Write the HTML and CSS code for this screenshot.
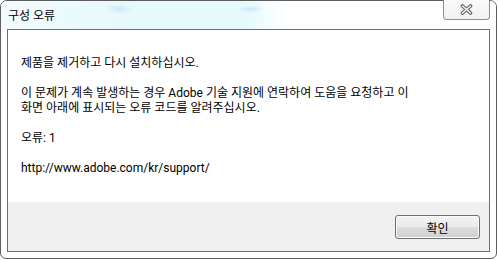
FILE: index.html
```html
<!DOCTYPE html>
<html lang="ko">
<head>
    <meta charset="UTF-8">
    <title>구성 오류</title>
    <link rel="stylesheet" href="styles.css">
</head>
<body>

<div class="window">
    <div class="titlebar">
        <span class="title">구성 오류</span>
        <button class="close-btn" aria-label="닫기">
            <svg width="13" height="11" viewBox="0 0 13 11">
                <path d="M2.5 2 L10.5 9 M10.5 2 L2.5 9" stroke="#5a5a5a" stroke-width="3.6" stroke-linecap="round"/>
                <path d="M2.5 2 L10.5 9 M10.5 2 L2.5 9" stroke="#fafafa" stroke-width="1.6" stroke-linecap="round"/>
            </svg>
        </button>
    </div>

    <div class="client">
        <div class="message">
            <p>제품을 제거하고 다시 설치하십시오.</p>
            <p>이 문제가 계속 발생하는 경우 Adobe 기술 지원에 연락하여 도움을 요청하고 이<br>화면 아래에 표시되는 오류 코드를 알려주십시오.</p>
            <p>오류: 1</p>
            <p>http://www.adobe.com/kr/support/</p>
        </div>
        <div class="footer">
            <button class="ok-btn">확인</button>
        </div>
    </div>
</div>

</body>
</html>
```

FILE: styles.css
```css
body {
    margin: 0;
    background-color: #ffffff;
    font-family: Roboto, "Noto Sans CJK KR", sans-serif;
    font-size: 12px;
    color: #000;
}

.window {
    box-sizing: border-box;
    width: 497px;
    height: 259px;
    border: 1px solid #5e5e5e;
    border-radius: 7px 7px 6px 6px;
    padding: 0 6px 6px 6px;
    background-color: #fdfdfd;
    box-shadow: inset 0 0 0 1px rgba(255, 255, 255, 0.9);
    display: flex;
    flex-direction: column;
}

.titlebar {
    height: 28px;
    margin: 0 -6px;
    padding: 0 6px 0 7px;
    border-radius: 6px 6px 0 0;
    display: flex;
    justify-content: space-between;
    align-items: flex-start;
    background:
        radial-gradient(ellipse 14px 5px at 118px 8px, rgba(190, 220, 245, 0.6), transparent),
        radial-gradient(ellipse 14px 4px at 250px 8px, rgba(190, 215, 245, 0.6), transparent),
        linear-gradient(90deg, #f3fbfd 0%, #e6f9fd 25%, #e6fafd 50%, #ffffff 58%);
}

.title {
    line-height: 30px;
}

.close-btn {
    box-sizing: border-box;
    width: 47px;
    height: 20px;
    margin-top: -1px;
    padding: 0;
    border: 1px solid #8d8d8d;
    border-top: none;
    border-radius: 0 0 4px 4px;
    background: linear-gradient(#fbfbfb, #f1f1f1);
    display: flex;
    justify-content: center;
    align-items: center;
}

.client {
    flex: 1;
    border: 1px solid #6f6f6f;
    display: flex;
    flex-direction: column;
}

.message {
    flex: 1;
    background-color: #ffffff;
    padding: 26px 13px 0 13px;
    line-height: 15px;
}

.message p {
    margin: 0 0 15px 0;
}

.footer {
    height: 49px;
    box-sizing: border-box;
    background-color: #f0f0f0;
    display: flex;
    justify-content: flex-end;
    align-items: flex-start;
    padding: 13px 9px 0 0;
}

.ok-btn {
    box-sizing: border-box;
    width: 85px;
    height: 24px;
    border: 1px solid #707070;
    border-radius: 3px;
    background: linear-gradient(#f2f2f2 0%, #ebebeb 50%, #dddddd 51%, #cfcfcf 100%);
    box-shadow: inset 0 0 0 1px #fbfbfb;
    font-family: Roboto, "Noto Sans CJK KR", sans-serif;
    font-size: 12px;
    color: #000;
    padding: 0;
}
```
